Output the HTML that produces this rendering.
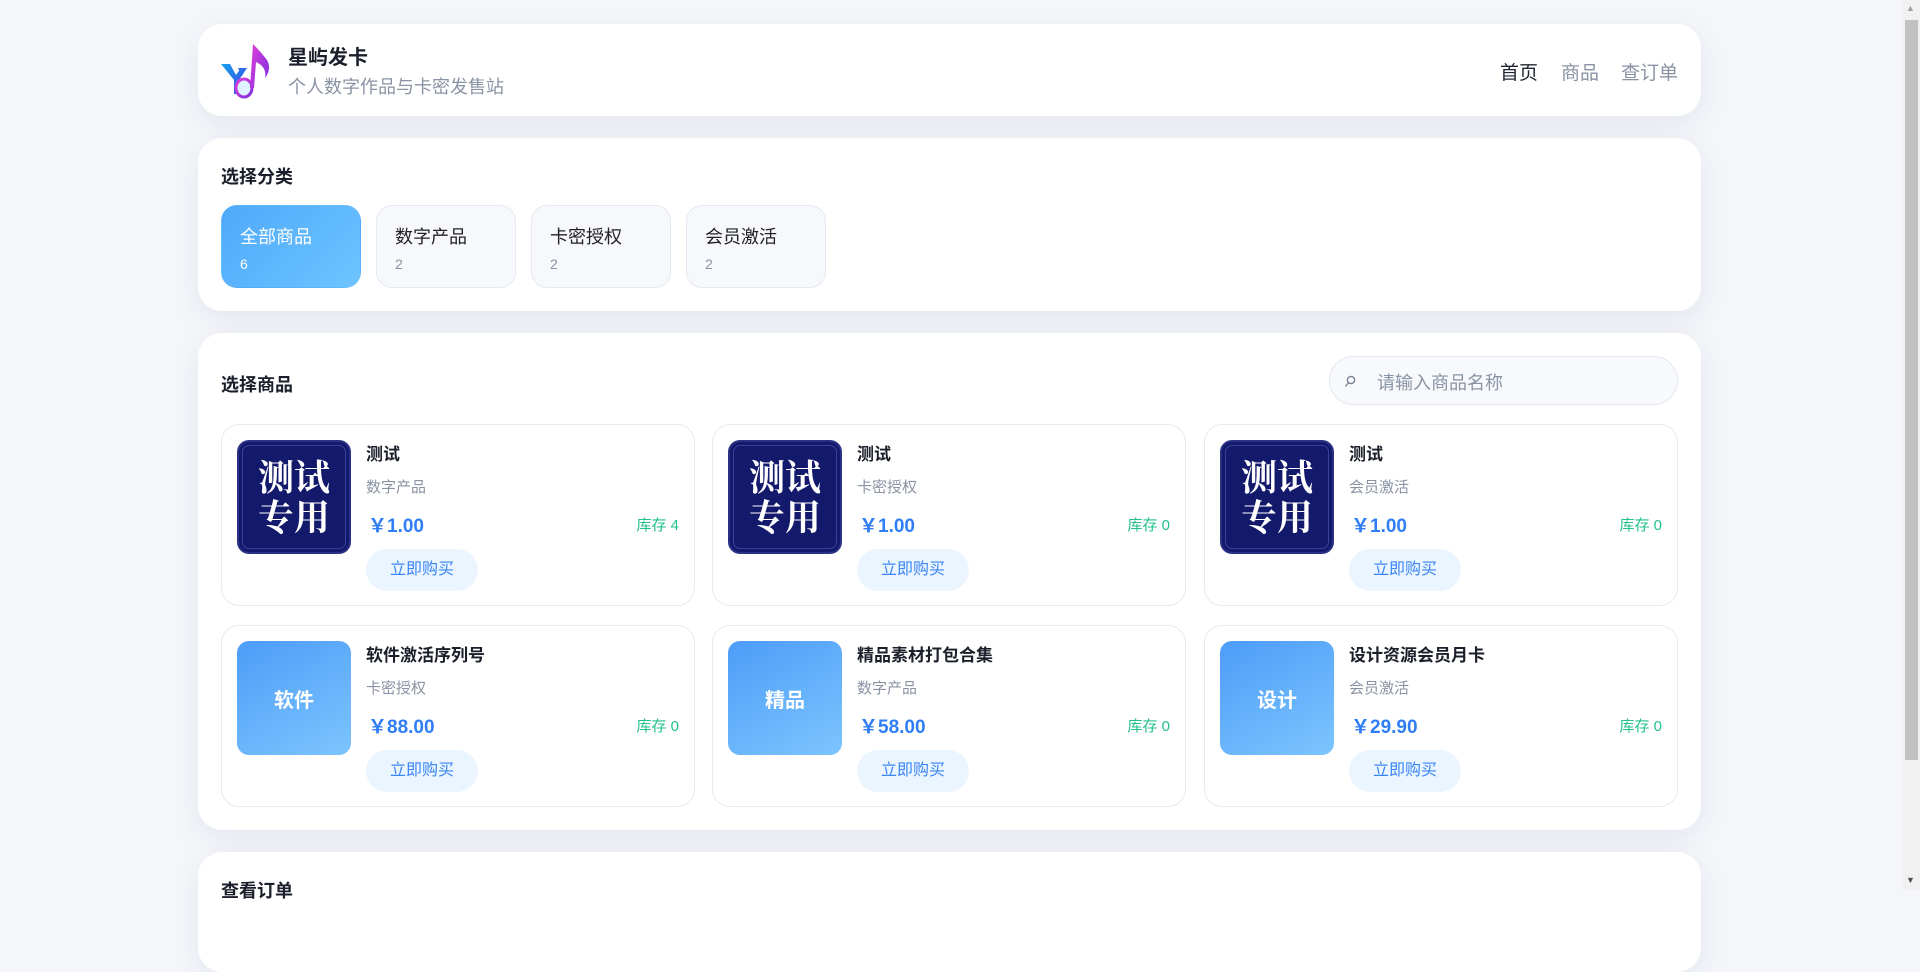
<!DOCTYPE html>
<html><head><meta charset="utf-8"><style>
*{box-sizing:border-box;margin:0;padding:0}
body{width:1920px;height:889px;overflow:hidden;background:#f4f6fa;font-family:"Liberation Sans","Noto Sans CJK SC",sans-serif;color:#1f2430;position:relative}
.card{position:absolute;left:198px;width:1503px;background:#fff;border-radius:24px;box-shadow:0 8px 28px rgba(30,50,90,0.08)}
.abs{position:absolute;white-space:nowrap}
.h{font-weight:bold;font-size:18px;color:#1a1f2b}
.cat{position:absolute;top:67px;width:140px;height:83px;border-radius:16px;background:#f6f8fc;border:1px solid #e5e9f1}
.cat .n{position:absolute;left:18px;top:17px;font-size:18px;color:#222}
.cat .c{position:absolute;left:18px;top:50px;font-size:14px;color:#8a93a3}
.cat.on{background:linear-gradient(135deg,#4fa9fa,#6dc4ff);border-color:transparent}
.cat.on .n,.cat.on .c{color:#fff}
.pc{position:absolute;width:474px;height:182px;border:1px solid #e6eaf1;border-radius:18px;background:#fff}
.img{position:absolute;left:15px;top:15px;width:114px;height:114px;border-radius:12px}
.navy{background:#141a6b;border:2px solid #2a3185;box-shadow:inset 0 0 0 3px #141a6b,inset 0 0 0 4px #39409a}
.navy span{position:absolute;left:0;right:0;text-align:center;color:#fff;font-family:"Noto Serif CJK SC",serif;font-weight:bold;font-size:36px;line-height:40px}
.grad{background:linear-gradient(150deg,#4d9cf8,#7cc5fe);color:#fff;font-weight:bold;font-size:20px;display:flex;align-items:center;justify-content:center}
.t{position:absolute;left:144px;top:15px;font-size:17px;font-weight:bold;color:#1b1f29;white-space:nowrap}
.s{position:absolute;left:144px;top:51px;font-size:15px;color:#8a93a3;white-space:nowrap}
.p{position:absolute;left:146px;top:86px;font-size:19px;font-weight:bold;color:#2f7ef5;white-space:nowrap}
.k{position:absolute;right:15px;top:89px;font-size:15px;color:#22c08a;white-space:nowrap}
.b{position:absolute;left:144px;top:124px;width:112px;height:42px;border-radius:21px;background:#ebf5ff;color:#3b86f6;font-size:16px;text-align:center;line-height:42px}
</style></head><body>
<div class="card" style="top:24px;height:92px">
 <svg class="abs" style="left:22px;top:18px" width="54" height="58" viewBox="0 0 54 58">
  <defs><linearGradient id="g1" x1="0" y1="0" x2="1" y2="1"><stop offset="0" stop-color="#1aa3f0"/><stop offset="1" stop-color="#3b3fe0"/></linearGradient>
  <linearGradient id="g2" x1="0" y1="0" x2="1" y2="1"><stop offset="0" stop-color="#e23fd8"/><stop offset="1" stop-color="#7a2fe0"/></linearGradient></defs>
  <path d="M1 22 L10 22 L16 33 L21 26 L27 26 L19 38 L19 52 L14 52 L14 38 Z" fill="url(#g1)"/>
  <path d="M18 26 L26 26 L22 34 Z" fill="#2a6ee8"/>
  <ellipse cx="24" cy="46" rx="8" ry="9" fill="#dff0ff" stroke="url(#g2)" stroke-width="3"/>
  <path d="M30 46 L33 2 Q41 10 47 18 Q52 27 45 36 Q47 25 36 20 L34 46 Z" fill="url(#g2)"/>
 </svg>
 <div class="abs" style="left:90px;top:17px;font-size:20px;font-weight:bold;color:#1a1f2b">星屿发卡</div>
 <div class="abs" style="left:90px;top:49px;font-size:18px;color:#8a93a3">个人数字作品与卡密发售站</div>
 <div class="abs" style="left:1302px;top:34px;font-size:19px;color:#1f2430">首页</div>
 <div class="abs" style="left:1363px;top:34px;font-size:19px;color:#8a93a3">商品</div>
 <div class="abs" style="left:1423px;top:34px;font-size:19px;color:#8a93a3">查订单</div>
</div>
<div class="card" style="top:138px;height:173px">
 <div class="abs h" style="left:23px;top:25px">选择分类</div>
 <div class="cat on" style="left:23px"><div class="n">全部商品</div><div class="c">6</div></div>
 <div class="cat" style="left:178px"><div class="n">数字产品</div><div class="c">2</div></div>
 <div class="cat" style="left:333px"><div class="n">卡密授权</div><div class="c">2</div></div>
 <div class="cat" style="left:488px"><div class="n">会员激活</div><div class="c">2</div></div>
</div>
<div class="card" style="top:333px;height:497px">
 <div class="abs h" style="left:23px;top:38px">选择商品</div>
 <div class="abs" style="left:1131px;top:23px;width:349px;height:49px;border-radius:25px;background:#f7f9fc;border:1px solid #e4e8f0">
  <svg class="abs" style="left:14px;top:18px" width="12" height="14" viewBox="0 0 12 14"><circle cx="7" cy="5" r="3.6" fill="none" stroke="#7a8394" stroke-width="1.4"/><path d="M4.5 7.5 L1.5 11.5" stroke="#7a8394" stroke-width="1.4"/></svg>
  <span class="abs" style="left:47px;top:12px;font-size:18px;color:#8a93a3">请输入商品名称</span>
 </div>
 <div class="pc" style="left:23px;top:91px"><div class="img navy"><span style="top:14px">测试</span><span style="top:54px">专用</span></div><div class="t">测试</div><div class="s">数字产品</div><div class="p">￥1.00</div><div class="k">库存 4</div><div class="b">立即购买</div></div>
 <div class="pc" style="left:514px;top:91px"><div class="img navy"><span style="top:14px">测试</span><span style="top:54px">专用</span></div><div class="t">测试</div><div class="s">卡密授权</div><div class="p">￥1.00</div><div class="k">库存 0</div><div class="b">立即购买</div></div>
 <div class="pc" style="left:1006px;top:91px"><div class="img navy"><span style="top:14px">测试</span><span style="top:54px">专用</span></div><div class="t">测试</div><div class="s">会员激活</div><div class="p">￥1.00</div><div class="k">库存 0</div><div class="b">立即购买</div></div>
 <div class="pc" style="left:23px;top:292px"><div class="img grad">软件</div><div class="t">软件激活序列号</div><div class="s">卡密授权</div><div class="p">￥88.00</div><div class="k">库存 0</div><div class="b">立即购买</div></div>
 <div class="pc" style="left:514px;top:292px"><div class="img grad">精品</div><div class="t">精品素材打包合集</div><div class="s">数字产品</div><div class="p">￥58.00</div><div class="k">库存 0</div><div class="b">立即购买</div></div>
 <div class="pc" style="left:1006px;top:292px"><div class="img grad">设计</div><div class="t">设计资源会员月卡</div><div class="s">会员激活</div><div class="p">￥29.90</div><div class="k">库存 0</div><div class="b">立即购买</div></div>
</div>
<div class="card" style="top:852px;height:120px">
 <div class="abs h" style="left:23px;top:25px">查看订单</div>
</div>
<div class="abs" style="left:1903px;top:0;width:17px;height:889px;background:#f1f1f1"></div>
<div class="abs" style="left:1905px;top:20px;width:13px;height:740px;background:#c1c1c1"></div>
<div class="abs" style="left:1906px;top:3px;font-size:9px;color:#a0a0a0">▲</div>
<div class="abs" style="left:1906px;top:875px;font-size:9px;color:#505050">▼</div>
</body></html>
